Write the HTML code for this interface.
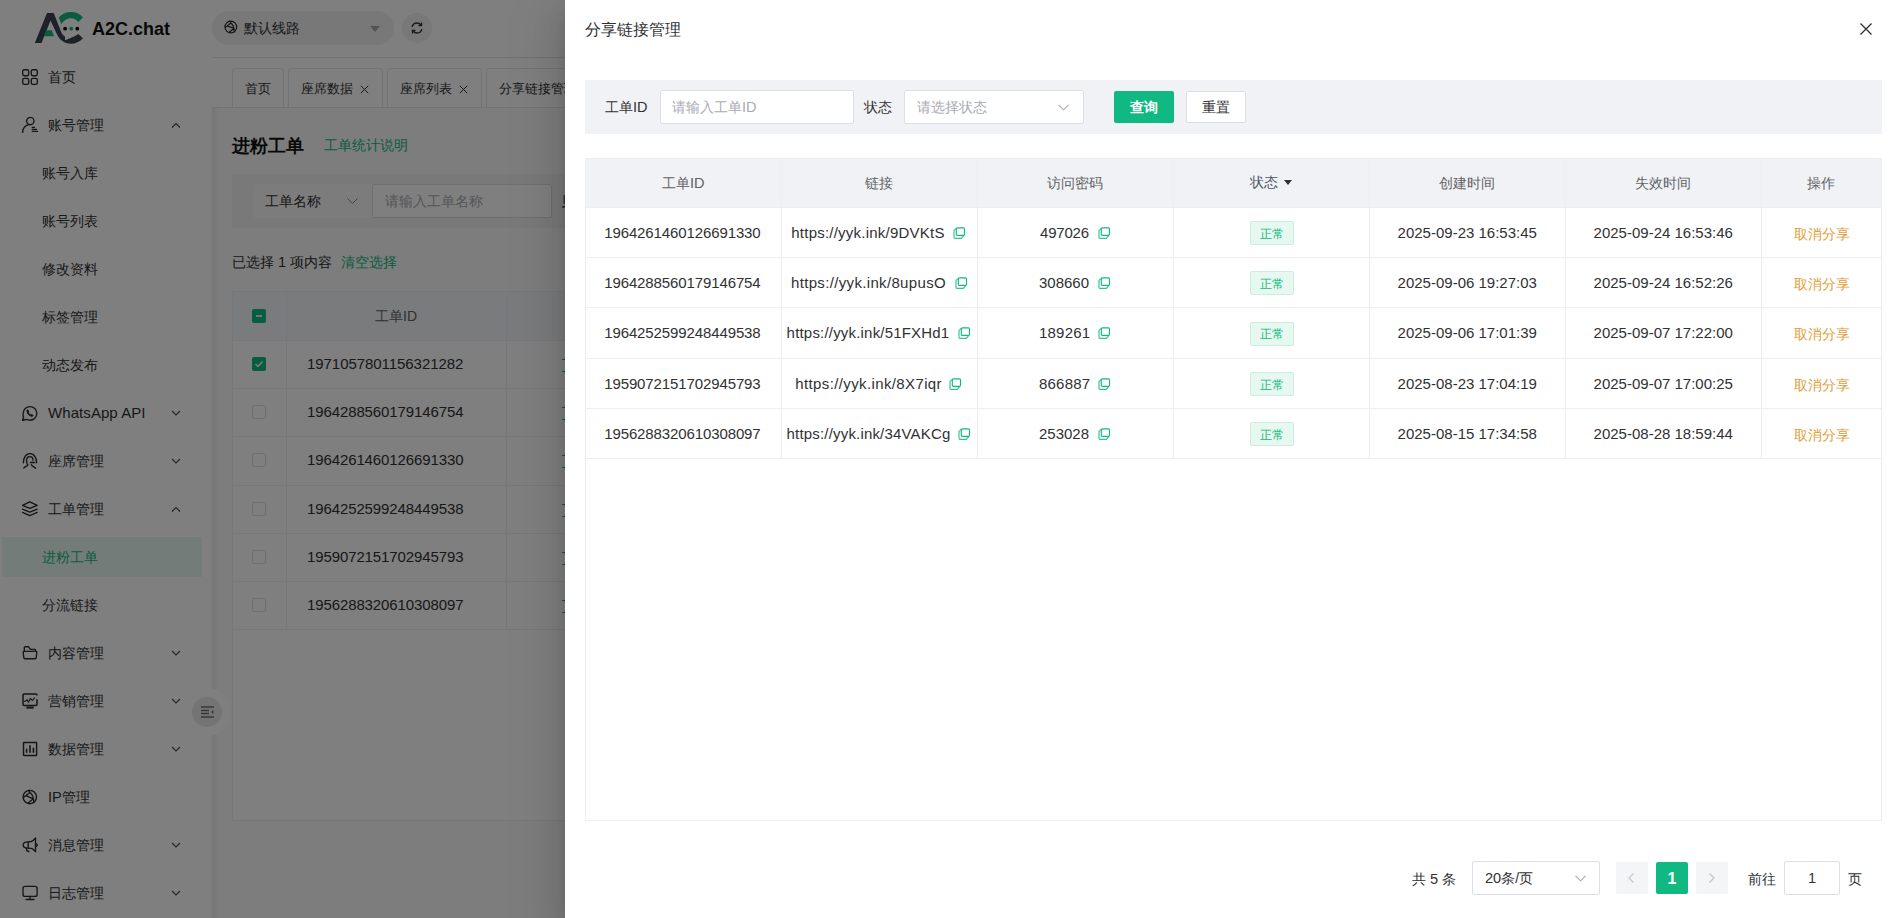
<!DOCTYPE html>
<html><head><meta charset="utf-8"><style>
*{box-sizing:border-box;margin:0;padding:0}
html,body{width:1898px;height:918px;overflow:hidden;background:#fff;font-family:"Liberation Sans",sans-serif;color:#303133;font-size:14px}
.t{position:absolute;white-space:nowrap}
.a{position:absolute}
svg{display:block}
</style></head><body>
<div class="a" style="left:0;top:0;width:1898px;height:918px;background:#fff">
<div class="a" style="left:0;top:0;width:212px;height:918px;background:#fff">
<svg class="a" style="left:34px;top:11px" width="50" height="34" viewBox="0 0 50 34">
<path d="M0.8 31.9 L13 2 L19.7 2 L27 20.5 C28 23 29.4 24.6 31 25.5 L31 29.3 C35.5 27.6 40 26 44.4 23.1 L48.9 27.3 C45.5 30.9 41.5 32.8 37 32.8 C30.5 32.8 25.6 29.2 22.6 22.6 L16.5 9.6 L7.5 31.9 Z" fill="#3b4252"/>
<path d="M12.1 19.2 L17.8 19.2 L20 25.3 L9.9 25.3 Z" fill="#10b981"/>
<path d="M24.8 6.4 C28 2.8 32.5 1.1 37 1.1 C41.5 1.1 46 2.8 48.9 6.4 L44.4 11 C42.5 8.6 39.8 7.2 37 7.2 C33 7.2 29.5 9.5 27.4 13.3 Z" fill="#10b981"/>
<circle cx="31.1" cy="17.7" r="1.9" fill="#000"/><circle cx="37.2" cy="17.7" r="1.9" fill="#10b981"/><circle cx="43.3" cy="17.7" r="1.9" fill="#000"/>
</svg>
<div class="t" style="left:92px;top:20px;font-size:18px;line-height:18px;color:#111;font-weight:bold;letter-spacing:0px">A2C.chat</div>
<div class="a" style="left:22px;top:69px"><svg width="16" height="16" viewBox="0 0 16 16" stroke="#2b2b2b" stroke-width="1.35" fill="none" stroke-linecap="round" stroke-linejoin="round"><rect x="0.7" y="0.7" width="6" height="6" rx="1.6"/><rect x="9.3" y="0.7" width="6" height="6" rx="1.6"/><rect x="0.7" y="9.3" width="6" height="6" rx="1.6"/><rect x="9.3" y="9.3" width="6" height="6" rx="1.6"/></svg></div>
<div class="t" style="left:48px;top:70px;font-size:14px;line-height:14px;color:#303133;font-weight:normal;">首页</div>
<div class="a" style="left:22px;top:117px"><svg width="16" height="16" viewBox="0 0 16 16" stroke="#2b2b2b" stroke-width="1.35" fill="none" stroke-linecap="round" stroke-linejoin="round"><circle cx="8.3" cy="4" r="3.7"/><path d="M6.6 7.6 C3 8.6 0.8 11.5 0.5 15.6"/><path d="M10.2 10.4 H12.5 M10.2 12.4 H14.5 M10.2 14.3 H15.6" stroke-width="1.2"/></svg></div>
<div class="t" style="left:48px;top:118px;font-size:14px;line-height:14px;color:#303133;font-weight:normal;">账号管理</div>
<div class="a" style="left:171px;top:122px"><svg width="10" height="7" viewBox="0 0 10 7"><path d="M1 5.5 L5 1.5 L9 5.5" stroke="#444" stroke-width="1.1" fill="none"/></svg></div>
<div class="t" style="left:42px;top:166px;font-size:14px;line-height:14px;color:#303133;font-weight:normal;">账号入库</div>
<div class="t" style="left:42px;top:214px;font-size:14px;line-height:14px;color:#303133;font-weight:normal;">账号列表</div>
<div class="t" style="left:42px;top:262px;font-size:14px;line-height:14px;color:#303133;font-weight:normal;">修改资料</div>
<div class="t" style="left:42px;top:310px;font-size:14px;line-height:14px;color:#303133;font-weight:normal;">标签管理</div>
<div class="t" style="left:42px;top:358px;font-size:14px;line-height:14px;color:#303133;font-weight:normal;">动态发布</div>
<div class="a" style="left:22px;top:405px"><svg width="16" height="16" viewBox="0 0 16 16" stroke="#2b2b2b" stroke-width="1.35" fill="none" stroke-linecap="round" stroke-linejoin="round"><path d="M0 15.8 L1.6 12.6 C1.1 11.4 0.9 10.2 1.2 8.5 C1.2 4.5 4.3 1.6 8 1.6 C11.8 1.6 14.8 4.6 14.8 8.4 C14.8 12.2 11.8 15.2 8 15.2 C6.6 15.2 5.6 14.4 4.3 14.4 Z"/><path d="M4.9 5 C5.4 4.4 6.1 4.5 6.4 5 L7 6.4 C7.2 6.8 7 7.2 6.7 7.4 C7.2 8.3 7.9 9.1 8.8 9.6 C9 9.3 9.5 9.1 9.9 9.3 L11.2 9.9 C11.7 10.2 11.7 10.9 11.2 11.3 C10.6 11.8 9.5 11.9 8.3 11.2 C6.7 10.3 5.3 8.8 4.7 7.2 C4.4 6.3 4.4 5.6 4.9 5 Z" fill="#2b2b2b" stroke="none"/></svg></div>
<div class="a" style="left:171px;top:410px"><svg width="10" height="7" viewBox="0 0 10 7"><path d="M1 1 L5 5 L9 1" stroke="#444" stroke-width="1.1" fill="none"/></svg></div>
<div class="a" style="left:22px;top:453px"><svg width="16" height="16" viewBox="0 0 16 16" stroke="#2b2b2b" stroke-width="1.35" fill="none" stroke-linecap="round" stroke-linejoin="round"><path d="M1.4 9.8 C1.4 4 4.4 0.6 8 0.6 C11.6 0.6 14.6 4 14.6 9.8"/><path d="M5.4 11.2 C4.5 10.3 4.6 9 4.6 7.2 C4.6 5 6 3.6 7.9 3.6 C9.8 3.6 11 5 11 7.2"/><path d="M8.4 9.6 H12.6" stroke-width="1.5"/><path d="M5.9 11.7 C5.2 13.4 3.2 13.6 1.8 15"/><path d="M9.4 11.7 C10.1 13.4 12.1 13.6 13.5 15.3"/></svg></div>
<div class="t" style="left:48px;top:454px;font-size:14px;line-height:14px;color:#303133;font-weight:normal;">座席管理</div>
<div class="a" style="left:171px;top:458px"><svg width="10" height="7" viewBox="0 0 10 7"><path d="M1 1 L5 5 L9 1" stroke="#444" stroke-width="1.1" fill="none"/></svg></div>
<div class="a" style="left:22px;top:501px"><svg width="16" height="16" viewBox="0 0 16 16" stroke="#2b2b2b" stroke-width="1.35" fill="none" stroke-linecap="round" stroke-linejoin="round"><path d="M7.8 0.9 L15.2 4.3 L7.8 7.4 L0.5 4.3 Z"/><path d="M0.5 8.2 L7.8 11.2 L15.2 8.2"/><path d="M0.5 11.4 L7.8 14.6 L15.2 11.4"/></svg></div>
<div class="t" style="left:48px;top:502px;font-size:14px;line-height:14px;color:#303133;font-weight:normal;">工单管理</div>
<div class="a" style="left:171px;top:506px"><svg width="10" height="7" viewBox="0 0 10 7"><path d="M1 5.5 L5 1.5 L9 5.5" stroke="#444" stroke-width="1.1" fill="none"/></svg></div>
<div class="a" style="left:2px;top:537px;width:200px;height:40px;background:#e7f8f1"></div>
<div class="t" style="left:42px;top:550px;font-size:14px;line-height:14px;color:#10b981;font-weight:normal;">进粉工单</div>
<div class="t" style="left:42px;top:598px;font-size:14px;line-height:14px;color:#303133;font-weight:normal;">分流链接</div>
<div class="a" style="left:22px;top:645px"><svg width="16" height="16" viewBox="0 0 16 16" stroke="#2b2b2b" stroke-width="1.35" fill="none" stroke-linecap="round" stroke-linejoin="round"><path d="M2.3 6.2 V2.6 C2.3 2 2.6 1.7 3.2 1.7 H6.5 L8.3 4.3 H12.8 C13.3 4.3 13.5 4.6 13.5 5 V6.2"/><path d="M1.2 7.2 C1.2 6.7 1.5 6.4 2 6.4 H14 C14.5 6.4 14.8 6.7 14.8 7.2 L14.2 12.7 C14.1 13.3 13.8 13.7 13.2 13.7 H2.8 C2.2 13.7 1.9 13.3 1.8 12.7 Z"/></svg></div>
<div class="t" style="left:48px;top:646px;font-size:14px;line-height:14px;color:#303133;font-weight:normal;">内容管理</div>
<div class="a" style="left:171px;top:650px"><svg width="10" height="7" viewBox="0 0 10 7"><path d="M1 1 L5 5 L9 1" stroke="#444" stroke-width="1.1" fill="none"/></svg></div>
<div class="a" style="left:22px;top:693px"><svg width="16" height="16" viewBox="0 0 16 16" stroke="#2b2b2b" stroke-width="1.35" fill="none" stroke-linecap="round" stroke-linejoin="round"><path d="M15 6.8 V11.2 C15 11.9 14.5 12.4 13.8 12.4 H2.2 C1.5 12.4 1 11.9 1 11.2 V2.1 C1 1.4 1.5 0.9 2.2 0.9 H13.8 C14.5 0.9 15 1.4 15 2.1" stroke-width="1.5"/><path d="M2.3 8.5 L4 7.8 L5.2 6.7 L6.5 9.3 L8.3 5.4 L10.4 7.5 L12.7 4.8" stroke-width="1.1"/><rect x="4.4" y="13.6" width="7.3" height="2" fill="#2b2b2b" stroke="none"/></svg></div>
<div class="t" style="left:48px;top:694px;font-size:14px;line-height:14px;color:#303133;font-weight:normal;">营销管理</div>
<div class="a" style="left:171px;top:698px"><svg width="10" height="7" viewBox="0 0 10 7"><path d="M1 1 L5 5 L9 1" stroke="#444" stroke-width="1.1" fill="none"/></svg></div>
<div class="a" style="left:22px;top:741px"><svg width="16" height="16" viewBox="0 0 16 16" stroke="#2b2b2b" stroke-width="1.35" fill="none" stroke-linecap="round" stroke-linejoin="round"><rect x="1.5" y="1.4" width="13.1" height="13" rx="0.4" stroke-width="1.45"/><path d="M4.6 8.4 V11.2 M8 4.8 V11.2 M11.4 7.4 V11.2" stroke-width="1.6"/></svg></div>
<div class="t" style="left:48px;top:742px;font-size:14px;line-height:14px;color:#303133;font-weight:normal;">数据管理</div>
<div class="a" style="left:171px;top:746px"><svg width="10" height="7" viewBox="0 0 10 7"><path d="M1 1 L5 5 L9 1" stroke="#444" stroke-width="1.1" fill="none"/></svg></div>
<div class="a" style="left:22px;top:789px"><svg width="16" height="16" viewBox="0 0 16 16" stroke="#2b2b2b" stroke-width="1.35" fill="none" stroke-linecap="round" stroke-linejoin="round"><circle cx="7.8" cy="8" r="6.7"/><path d="M3.8 6.7 L11.4 9.8 M7.8 3.5 L3.8 6.7 M7.8 3.5 C9.5 4.5 10.9 7 11.4 9.8 M11.4 9.8 L6.2 13.8 M11.4 9.8 L12 13.6 M7.8 3.5 L6.8 1.3 M3.8 6.7 L1.4 8.4"/></svg></div>
<div class="t" style="left:48px;top:790px;font-size:14px;line-height:14px;color:#303133;font-weight:normal;"><span style="font-size:14.6px">IP</span>管理</div>
<div class="a" style="left:22px;top:837px"><svg width="16" height="16" viewBox="0 0 16 16" stroke="#2b2b2b" stroke-width="1.35" fill="none" stroke-linecap="round" stroke-linejoin="round"><path d="M13.5 1.2 V14.5"/><path d="M13.5 1.2 C12 2.8 10.8 4.2 9.2 4.5 L5.4 4.8 C3 4.8 1.2 6.2 1.2 8 C1.2 9.8 3 11.1 5.4 11.1 L9.2 11.3 C10.8 11.6 12 13 13.5 14.5"/><path d="M6.2 4.8 V11.1"/><path d="M4.4 11.4 C4.4 13 5.4 14.5 7 14.5"/><path d="M13.8 6.5 C15 7 15.3 8 15.3 8 C15.3 8.6 14.8 9.2 13.8 9.5"/></svg></div>
<div class="t" style="left:48px;top:838px;font-size:14px;line-height:14px;color:#303133;font-weight:normal;">消息管理</div>
<div class="a" style="left:171px;top:842px"><svg width="10" height="7" viewBox="0 0 10 7"><path d="M1 1 L5 5 L9 1" stroke="#444" stroke-width="1.1" fill="none"/></svg></div>
<div class="a" style="left:22px;top:885px"><svg width="16" height="16" viewBox="0 0 16 16" stroke="#2b2b2b" stroke-width="1.35" fill="none" stroke-linecap="round" stroke-linejoin="round"><rect x="1" y="1.4" width="14.1" height="10" rx="2"/><path d="M4.1 14.5 H12 M8 11.4 V14.3"/></svg></div>
<div class="t" style="left:48px;top:886px;font-size:14px;line-height:14px;color:#303133;font-weight:normal;">日志管理</div>
<div class="a" style="left:171px;top:890px"><svg width="10" height="7" viewBox="0 0 10 7"><path d="M1 1 L5 5 L9 1" stroke="#444" stroke-width="1.1" fill="none"/></svg></div>
</div>
<div class="a" style="left:212px;top:0;width:1686px;height:58px;background:#fff;border-bottom:1px solid #e4e7ed"></div>
<div class="a" style="left:212px;top:11px;width:182px;height:34px;border-radius:17px;background:#f0f0f2"></div>
<div class="a" style="left:224px;top:20px;transform:scale(0.875);transform-origin:0 0"><svg width="16" height="16" viewBox="0 0 16 16" stroke="#2b2b2b" stroke-width="1.35" fill="none" stroke-linecap="round" stroke-linejoin="round"><circle cx="7.8" cy="8" r="6.7"/><path d="M3.8 6.7 L11.4 9.8 M7.8 3.5 L3.8 6.7 M7.8 3.5 C9.5 4.5 10.9 7 11.4 9.8 M11.4 9.8 L6.2 13.8 M11.4 9.8 L12 13.6 M7.8 3.5 L6.8 1.3 M3.8 6.7 L1.4 8.4"/></svg></div>
<div class="t" style="left:244px;top:21px;font-size:14px;line-height:14px;color:#303133;font-weight:normal;">默认线路</div>
<svg class="a" style="left:370px;top:26px" width="10" height="6" viewBox="0 0 10 6"><path d="M0 0 H10 L5 6 Z" fill="#a8abb2"/></svg>
<div class="a" style="left:402px;top:13px;width:30px;height:30px;border-radius:15px;background:#f0f0f2"></div>
<svg class="a" style="left:410px;top:21px" width="14" height="14" viewBox="0 0 14 14" stroke="#333" stroke-width="1.4" fill="none"><path d="M2.2 6 C2.6 3.6 4.6 2 7 2 C8.6 2 10 2.8 10.9 4"/><path d="M11.8 8 C11.4 10.4 9.4 12 7 12 C5.4 12 4 11.2 3.1 10"/><path d="M11.5 1.5 V4.6 H8.5" /><path d="M2.5 12.5 V9.4 H5.5"/></svg>
<div class="a" style="left:212px;top:58px;width:1686px;height:50px;background:#fff;border-bottom:1px solid #e4e7ed"></div>
<div class="a" style="left:232px;top:68px;width:52px;height:39px;border:1px solid #e4e7ed;border-bottom:none;border-radius:4px 4px 0 0;background:#fff"></div>
<div class="t" style="left:245px;top:82px;font-size:13px;line-height:13px;color:#303133;font-weight:normal;">首页</div>
<div class="a" style="left:288px;top:68px;width:95px;height:39px;border:1px solid #e4e7ed;border-bottom:none;border-radius:4px 4px 0 0;background:#fff"></div>
<div class="t" style="left:301px;top:82px;font-size:13px;line-height:13px;color:#303133;font-weight:normal;">座席数据</div>
<svg class="a" style="left:360px;top:85px" width="9" height="9" viewBox="0 0 9 9" stroke="#333" stroke-width="1"><path d="M0.8 0.8 L8.2 8.2 M8.2 0.8 L0.8 8.2"/></svg>
<div class="a" style="left:387px;top:68px;width:95px;height:39px;border:1px solid #e4e7ed;border-bottom:none;border-radius:4px 4px 0 0;background:#fff"></div>
<div class="t" style="left:400px;top:82px;font-size:13px;line-height:13px;color:#303133;font-weight:normal;">座席列表</div>
<svg class="a" style="left:459px;top:85px" width="9" height="9" viewBox="0 0 9 9" stroke="#333" stroke-width="1"><path d="M0.8 0.8 L8.2 8.2 M8.2 0.8 L0.8 8.2"/></svg>
<div class="a" style="left:486px;top:68px;width:115px;height:39px;border:1px solid #e4e7ed;border-bottom:none;border-radius:4px 4px 0 0;background:#fff"></div>
<div class="t" style="left:499px;top:82px;font-size:13px;line-height:13px;color:#303133;font-weight:normal;">分享链接管理</div>
<div class="a" style="left:212px;top:108px;width:1686px;height:810px;background:#fafafa"></div>
<div class="a" style="left:212px;top:108px;width:6px;height:810px;background:linear-gradient(90deg,rgba(0,0,0,.05),rgba(0,0,0,0))"></div>
<div class="t" style="left:232px;top:137px;font-size:18px;line-height:18px;color:#111;font-weight:bold;">进粉工单</div>
<div class="t" style="left:324px;top:138px;font-size:14px;line-height:14px;color:#10b981;font-weight:normal;">工单统计说明</div>
<div class="a" style="left:232px;top:174px;width:1660px;height:54px;background:#f2f2f2"></div>
<div class="a" style="left:253px;top:184px;width:120px;height:34px;background:#f8f8f8;border-radius:2px 0 0 2px"></div>
<div class="t" style="left:265px;top:194px;font-size:14px;line-height:14px;color:#303133;font-weight:normal;">工单名称</div>
<svg class="a" style="left:347px;top:198px" width="11" height="6" viewBox="0 0 11 6"><path d="M0.5 0.5 L5.5 5.5 L10.5 0.5" stroke="#888" stroke-width="1" fill="none"/></svg>
<div class="a" style="left:372px;top:184px;width:180px;height:34px;background:#fff;border:1px solid #dcdfe6;border-radius:2px"></div>
<div class="t" style="left:385px;top:194px;font-size:14px;line-height:14px;color:#a8abb2;font-weight:normal;">请输入工单名称</div>
<div class="t" style="left:561px;top:194px;font-size:14px;line-height:14px;color:#303133;font-weight:normal;">贝</div>
<div class="t" style="left:232px;top:255px;font-size:14px;line-height:14px;color:#303133;font-weight:normal;">已选择 <span style="font-size:14.6px">1</span> 项内容</div>
<div class="t" style="left:341px;top:255px;font-size:14px;line-height:14px;color:#10b981;font-weight:normal;">清空选择</div>
<div class="a" style="left:232px;top:291px;width:1660px;height:530px;background:#fff;border:1px solid #ebeef5"></div>
<div class="a" style="left:233px;top:292px;width:1658px;height:49px;background:#f5f7fa;border-bottom:1px solid #ebeef5"></div>
<div class="a" style="left:286px;top:292px;width:1px;height:338px;background:#ebeef5"></div>
<div class="a" style="left:506px;top:292px;width:1px;height:338px;background:#ebeef5"></div>
<svg class="a" style="left:252px;top:309px" width="14" height="14" viewBox="0 0 14 14"><rect width="14" height="14" rx="2" fill="#10b981"/><path d="M4 7 H10" stroke="#fff" stroke-width="1.6"/></svg>
<div class="t" style="left:375px;top:309px;font-size:14px;line-height:14px;color:#606266;font-weight:normal;">工单ID</div>
<div class="a" style="left:233px;top:388px;width:1658px;height:1px;background:#ebeef5"></div>
<svg class="a" style="left:252px;top:357px" width="14" height="14" viewBox="0 0 14 14"><rect width="14" height="14" rx="2" fill="#10b981"/><path d="M3.5 7 L6 9.5 L10.5 4.5" stroke="#fff" stroke-width="1.3" fill="none"/></svg>
<div class="a" style="left:562px;top:359px;width:3px;height:1px;background:#10b981"></div>
<div class="a" style="left:562px;top:371px;width:3px;height:1px;background:#10b981"></div>
<div class="a" style="left:233px;top:436px;width:1658px;height:1px;background:#ebeef5"></div>
<div class="a" style="left:252px;top:405px;width:14px;height:14px;border:1px solid #dcdfe6;border-radius:2px;background:#fff"></div>
<div class="a" style="left:562px;top:407px;width:3px;height:1px;background:#10b981"></div>
<div class="a" style="left:562px;top:419px;width:3px;height:1px;background:#10b981"></div>
<div class="a" style="left:233px;top:485px;width:1658px;height:1px;background:#ebeef5"></div>
<div class="a" style="left:252px;top:453px;width:14px;height:14px;border:1px solid #dcdfe6;border-radius:2px;background:#fff"></div>
<div class="a" style="left:562px;top:455px;width:3px;height:1px;background:#10b981"></div>
<div class="a" style="left:562px;top:467px;width:3px;height:1px;background:#10b981"></div>
<div class="a" style="left:233px;top:533px;width:1658px;height:1px;background:#ebeef5"></div>
<div class="a" style="left:252px;top:502px;width:14px;height:14px;border:1px solid #dcdfe6;border-radius:2px;background:#fff"></div>
<div class="a" style="left:562px;top:504px;width:3px;height:1px;background:#10b981"></div>
<div class="a" style="left:562px;top:516px;width:3px;height:1px;background:#10b981"></div>
<div class="a" style="left:233px;top:581px;width:1658px;height:1px;background:#ebeef5"></div>
<div class="a" style="left:252px;top:550px;width:14px;height:14px;border:1px solid #dcdfe6;border-radius:2px;background:#fff"></div>
<div class="a" style="left:562px;top:552px;width:3px;height:1px;background:#10b981"></div>
<div class="a" style="left:562px;top:564px;width:3px;height:1px;background:#10b981"></div>
<div class="a" style="left:233px;top:629px;width:1658px;height:1px;background:#ebeef5"></div>
<div class="a" style="left:252px;top:598px;width:14px;height:14px;border:1px solid #dcdfe6;border-radius:2px;background:#fff"></div>
<div class="a" style="left:562px;top:600px;width:3px;height:1px;background:#10b981"></div>
<div class="a" style="left:562px;top:612px;width:3px;height:1px;background:#10b981"></div>
<div class="t" style="left:307px;top:356.0px;font-size:15px;line-height:15px;letter-spacing:-0.056px;color:#303133">1971057801156321282</div><div class="t" style="left:307px;top:404.0px;font-size:15px;line-height:15px;letter-spacing:-0.111px;color:#303133">1964288560179146754</div><div class="t" style="left:307px;top:452.0px;font-size:15px;line-height:15px;letter-spacing:-0.111px;color:#303133">1964261460126691330</div><div class="t" style="left:307px;top:501.0px;font-size:15px;line-height:15px;letter-spacing:-0.111px;color:#303133">1964252599248449538</div><div class="t" style="left:307px;top:549.0px;font-size:15px;line-height:15px;letter-spacing:-0.111px;color:#303133">1959072151702945793</div><div class="t" style="left:307px;top:597.0px;font-size:15px;line-height:15px;letter-spacing:-0.111px;color:#303133">1956288320610308097</div>
<div class="t" style="left:48.1px;top:405.0px;font-size:15px;line-height:15px;letter-spacing:0.055px;color:#303133">WhatsApp API</div>
<div class="a" style="left:183px;top:688px;width:48px;height:48px;border-radius:24px;background:#fff"></div>
<div class="a" style="left:192px;top:697px;width:30px;height:30px;border-radius:15px;background:#e8e8e8"></div>
<svg class="a" style="left:200px;top:705px" width="15" height="13" viewBox="0 0 15 13"><path d="M1 2 H14 M1 5.4 H9 M1 8.5 H9 M1 12 H14" stroke="#707070" stroke-width="1.5"/><path d="M13.3 5 L11 7 L13.3 9 Z" fill="#707070"/></svg>
</div>
<div class="a" style="left:0;top:0;width:1898px;height:918px;background:rgba(0,0,0,.5)"></div>
<div class="a" style="left:565px;top:0;width:1333px;height:918px;background:#fff;box-shadow:0 16px 48px 16px rgba(0,0,0,.08),0 12px 32px rgba(0,0,0,.12),0 8px 16px -8px rgba(0,0,0,.16)">
<div class="t" style="left:20px;top:22px;font-size:16px;line-height:16px;color:#303133;font-weight:normal;">分享链接管理</div>
<svg class="a" style="left:1295px;top:23px" width="12" height="12" viewBox="0 0 12 12" stroke="#303133" stroke-width="1.3"><path d="M0.5 0.5 L11.5 11.5 M11.5 0.5 L0.5 11.5"/></svg>
<div class="a" style="left:20px;top:80px;width:1297px;height:54px;background:#f1f2f5"></div>
<div class="t" style="left:40px;top:100px;font-size:14px;line-height:14px;color:#303133;font-weight:normal;">工单<span style="font-size:14.5px">ID</span></div>
<div class="a" style="left:95px;top:90px;width:194px;height:34px;background:#fff;border:1px solid #dcdfe6;border-radius:2px"></div>
<div class="t" style="left:107px;top:100px;font-size:14px;line-height:14px;color:#a8abb2;font-weight:normal;">请输入工单<span style="font-size:14.5px">ID</span></div>
<div class="t" style="left:299px;top:100px;font-size:14px;line-height:14px;color:#303133;font-weight:normal;">状态</div>
<div class="a" style="left:339px;top:90px;width:180px;height:34px;background:#fff;border:1px solid #dcdfe6;border-radius:2px"></div>
<div class="t" style="left:352px;top:100px;font-size:14px;line-height:14px;color:#a8abb2;font-weight:normal;">请选择状态</div>
<svg class="a" style="left:493px;top:104px" width="11" height="7" viewBox="0 0 11 7"><path d="M0.5 0.8 L5.5 5.8 L10.5 0.8" stroke="#a8abb2" stroke-width="1.1" fill="none"/></svg>
<div class="a" style="left:549px;top:91px;width:60px;height:32px;background:#10b981;border-radius:2px"></div>
<div class="t" style="left:565px;top:100px;font-size:14px;line-height:14px;color:#fff;font-weight:bold;">查询</div>
<div class="a" style="left:621px;top:91px;width:60px;height:32px;background:#fff;border:1px solid #dcdfe6;border-radius:2px"></div>
<div class="t" style="left:637px;top:100px;font-size:14px;line-height:14px;color:#303133;font-weight:normal;">重置</div>
<div class="a" style="left:20px;top:158px;width:1297px;height:663px;border:1px solid #ebeef5;background:#fff"></div>
<div class="a" style="left:21px;top:159px;width:1295px;height:49px;background:#f1f2f5"></div>
<div class="a" style="left:21px;top:207px;width:1295px;height:1px;background:#ebeef5"></div>
<div class="a" style="left:216px;top:159px;width:1px;height:300px;background:#ebeef5"></div>
<div class="a" style="left:412px;top:159px;width:1px;height:300px;background:#ebeef5"></div>
<div class="a" style="left:608px;top:159px;width:1px;height:300px;background:#ebeef5"></div>
<div class="a" style="left:804px;top:159px;width:1px;height:300px;background:#ebeef5"></div>
<div class="a" style="left:1000px;top:159px;width:1px;height:300px;background:#ebeef5"></div>
<div class="a" style="left:1196px;top:159px;width:1px;height:300px;background:#ebeef5"></div>
<div class="t" style="left:97px;top:176px;font-size:14px;line-height:14px;color:#606266;font-weight:normal;">工单<span style="font-size:14.5px">ID</span></div>
<div class="t" style="left:300px;top:176px;font-size:14px;line-height:14px;color:#606266;font-weight:normal;">链接</div>
<div class="t" style="left:482px;top:176px;font-size:14px;line-height:14px;color:#606266;font-weight:normal;">访问密码</div>
<div class="t" style="left:685px;top:175px;font-size:14px;line-height:14px;color:#4c5566;font-weight:normal;">状态</div>
<div class="t" style="left:874px;top:176px;font-size:14px;line-height:14px;color:#606266;font-weight:normal;">创建时间</div>
<div class="t" style="left:1070px;top:176px;font-size:14px;line-height:14px;color:#606266;font-weight:normal;">失效时间</div>
<div class="t" style="left:1242px;top:176px;font-size:14px;line-height:14px;color:#606266;font-weight:normal;">操作</div>
<svg class="a" style="left:719px;top:180px" width="8" height="5" viewBox="0 0 8 5"><path d="M0 0 H8 L4 5 Z" fill="#303133"/></svg>
<div class="a" style="left:21px;top:257px;width:1295px;height:1px;background:#ebeef5"></div>
<div class="t" style="left:39.2px;top:224.5px;font-size:15px;line-height:15px;letter-spacing:-0.111px;color:#303133">1964261460126691330</div>
<div class="t" style="left:226.3px;top:224.5px;font-size:15px;line-height:15px;letter-spacing:0.224px;color:#303133">https://yyk.ink/9DVKtS</div>
<div class="t" style="left:475px;top:224.5px;font-size:15px;line-height:15px;letter-spacing:-0.2px;color:#303133">497026</div>
<div class="a" style="left:685px;top:221px;width:44px;height:24px;background:#e7f8f1;border:1px solid #c8efdf;border-radius:2px"></div>
<div class="t" style="left:695px;top:228px;font-size:12px;line-height:12px;color:#10b981;font-weight:normal;">正常</div>
<div class="t" style="left:832.6px;top:224.5px;font-size:15px;line-height:15px;letter-spacing:0.0px;color:#303133">2025-09-23 16:53:45</div>
<div class="t" style="left:1028.6px;top:224.5px;font-size:15px;line-height:15px;letter-spacing:0.0px;color:#303133">2025-09-24 16:53:46</div>
<div class="t" style="left:1229px;top:226.5px;font-size:14px;line-height:14px;color:#e29c36;font-weight:normal;">取消分享</div>
<svg class="a" style="left:382.20000000000005px;top:221.5px" width="24" height="24" viewBox="0 0 24 24" stroke="#10b981" stroke-width="1.15" fill="none" stroke-linejoin="round"><rect x="9.3" y="5.8" width="8.2" height="7.6" rx="1.1"/><path d="M9.3 6.4 L7 8.4 V15.4 C7 16 7.3 16.3 7.9 16.3 H14.4 L16.8 13.4" stroke-opacity="0.85"/></svg>
<svg class="a" style="left:527.0px;top:221.5px" width="24" height="24" viewBox="0 0 24 24" stroke="#10b981" stroke-width="1.15" fill="none" stroke-linejoin="round"><rect x="9.3" y="5.8" width="8.2" height="7.6" rx="1.1"/><path d="M9.3 6.4 L7 8.4 V15.4 C7 16 7.3 16.3 7.9 16.3 H14.4 L16.8 13.4" stroke-opacity="0.85"/></svg>
<div class="a" style="left:21px;top:307px;width:1295px;height:1px;background:#ebeef5"></div>
<div class="t" style="left:39.2px;top:274.5px;font-size:15px;line-height:15px;letter-spacing:-0.111px;color:#303133">1964288560179146754</div>
<div class="t" style="left:226px;top:274.5px;font-size:15px;line-height:15px;letter-spacing:0.338px;color:#303133">https://yyk.ink/8upusO</div>
<div class="t" style="left:474px;top:274.5px;font-size:15px;line-height:15px;letter-spacing:0.0px;color:#303133">308660</div>
<div class="a" style="left:685px;top:271px;width:44px;height:24px;background:#e7f8f1;border:1px solid #c8efdf;border-radius:2px"></div>
<div class="t" style="left:695px;top:278px;font-size:12px;line-height:12px;color:#10b981;font-weight:normal;">正常</div>
<div class="t" style="left:832.6px;top:274.5px;font-size:15px;line-height:15px;letter-spacing:0.0px;color:#303133">2025-09-06 19:27:03</div>
<div class="t" style="left:1028.6px;top:274.5px;font-size:15px;line-height:15px;letter-spacing:0.0px;color:#303133">2025-09-24 16:52:26</div>
<div class="t" style="left:1229px;top:276.5px;font-size:14px;line-height:14px;color:#e29c36;font-weight:normal;">取消分享</div>
<svg class="a" style="left:383.5px;top:271.5px" width="24" height="24" viewBox="0 0 24 24" stroke="#10b981" stroke-width="1.15" fill="none" stroke-linejoin="round"><rect x="9.3" y="5.8" width="8.2" height="7.6" rx="1.1"/><path d="M9.3 6.4 L7 8.4 V15.4 C7 16 7.3 16.3 7.9 16.3 H14.4 L16.8 13.4" stroke-opacity="0.85"/></svg>
<svg class="a" style="left:527.0px;top:271.5px" width="24" height="24" viewBox="0 0 24 24" stroke="#10b981" stroke-width="1.15" fill="none" stroke-linejoin="round"><rect x="9.3" y="5.8" width="8.2" height="7.6" rx="1.1"/><path d="M9.3 6.4 L7 8.4 V15.4 C7 16 7.3 16.3 7.9 16.3 H14.4 L16.8 13.4" stroke-opacity="0.85"/></svg>
<div class="a" style="left:21px;top:358px;width:1295px;height:1px;background:#ebeef5"></div>
<div class="t" style="left:39.2px;top:325.0px;font-size:15px;line-height:15px;letter-spacing:-0.111px;color:#303133">1964252599248449538</div>
<div class="t" style="left:221.6px;top:325.0px;font-size:15px;line-height:15px;letter-spacing:0.191px;color:#303133">https://yyk.ink/51FXHd1</div>
<div class="t" style="left:474px;top:325.0px;font-size:15px;line-height:15px;letter-spacing:0.2px;color:#303133">189261</div>
<div class="a" style="left:685px;top:322px;width:44px;height:24px;background:#e7f8f1;border:1px solid #c8efdf;border-radius:2px"></div>
<div class="t" style="left:695px;top:328px;font-size:12px;line-height:12px;color:#10b981;font-weight:normal;">正常</div>
<div class="t" style="left:832.6px;top:325.0px;font-size:15px;line-height:15px;letter-spacing:0.0px;color:#303133">2025-09-06 17:01:39</div>
<div class="t" style="left:1028.6px;top:325.0px;font-size:15px;line-height:15px;letter-spacing:0.0px;color:#303133">2025-09-07 17:22:00</div>
<div class="t" style="left:1229px;top:327.0px;font-size:14px;line-height:14px;color:#e29c36;font-weight:normal;">取消分享</div>
<svg class="a" style="left:387.1px;top:322.0px" width="24" height="24" viewBox="0 0 24 24" stroke="#10b981" stroke-width="1.15" fill="none" stroke-linejoin="round"><rect x="9.3" y="5.8" width="8.2" height="7.6" rx="1.1"/><path d="M9.3 6.4 L7 8.4 V15.4 C7 16 7.3 16.3 7.9 16.3 H14.4 L16.8 13.4" stroke-opacity="0.85"/></svg>
<svg class="a" style="left:527.0px;top:322.0px" width="24" height="24" viewBox="0 0 24 24" stroke="#10b981" stroke-width="1.15" fill="none" stroke-linejoin="round"><rect x="9.3" y="5.8" width="8.2" height="7.6" rx="1.1"/><path d="M9.3 6.4 L7 8.4 V15.4 C7 16 7.3 16.3 7.9 16.3 H14.4 L16.8 13.4" stroke-opacity="0.85"/></svg>
<div class="a" style="left:21px;top:408px;width:1295px;height:1px;background:#ebeef5"></div>
<div class="t" style="left:39.2px;top:375.5px;font-size:15px;line-height:15px;letter-spacing:-0.111px;color:#303133">1959072151702945793</div>
<div class="t" style="left:230.3px;top:375.5px;font-size:15px;line-height:15px;letter-spacing:0.376px;color:#303133">https://yyk.ink/8X7iqr</div>
<div class="t" style="left:474px;top:375.5px;font-size:15px;line-height:15px;letter-spacing:0.2px;color:#303133">866887</div>
<div class="a" style="left:685px;top:372px;width:44px;height:24px;background:#e7f8f1;border:1px solid #c8efdf;border-radius:2px"></div>
<div class="t" style="left:695px;top:379px;font-size:12px;line-height:12px;color:#10b981;font-weight:normal;">正常</div>
<div class="t" style="left:832.6px;top:375.5px;font-size:15px;line-height:15px;letter-spacing:0.0px;color:#303133">2025-08-23 17:04:19</div>
<div class="t" style="left:1028.6px;top:375.5px;font-size:15px;line-height:15px;letter-spacing:0.0px;color:#303133">2025-09-07 17:00:25</div>
<div class="t" style="left:1229px;top:377.5px;font-size:14px;line-height:14px;color:#e29c36;font-weight:normal;">取消分享</div>
<svg class="a" style="left:378.29999999999995px;top:372.5px" width="24" height="24" viewBox="0 0 24 24" stroke="#10b981" stroke-width="1.15" fill="none" stroke-linejoin="round"><rect x="9.3" y="5.8" width="8.2" height="7.6" rx="1.1"/><path d="M9.3 6.4 L7 8.4 V15.4 C7 16 7.3 16.3 7.9 16.3 H14.4 L16.8 13.4" stroke-opacity="0.85"/></svg>
<svg class="a" style="left:527.0px;top:372.5px" width="24" height="24" viewBox="0 0 24 24" stroke="#10b981" stroke-width="1.15" fill="none" stroke-linejoin="round"><rect x="9.3" y="5.8" width="8.2" height="7.6" rx="1.1"/><path d="M9.3 6.4 L7 8.4 V15.4 C7 16 7.3 16.3 7.9 16.3 H14.4 L16.8 13.4" stroke-opacity="0.85"/></svg>
<div class="a" style="left:21px;top:458px;width:1295px;height:1px;background:#ebeef5"></div>
<div class="t" style="left:39.2px;top:425.5px;font-size:15px;line-height:15px;letter-spacing:-0.111px;color:#303133">1956288320610308097</div>
<div class="t" style="left:221.6px;top:425.5px;font-size:15px;line-height:15px;letter-spacing:0.177px;color:#303133">https://yyk.ink/34VAKCg</div>
<div class="t" style="left:474px;top:425.5px;font-size:15px;line-height:15px;letter-spacing:0.0px;color:#303133">253028</div>
<div class="a" style="left:685px;top:422px;width:44px;height:24px;background:#e7f8f1;border:1px solid #c8efdf;border-radius:2px"></div>
<div class="t" style="left:695px;top:429px;font-size:12px;line-height:12px;color:#10b981;font-weight:normal;">正常</div>
<div class="t" style="left:832.6px;top:425.5px;font-size:15px;line-height:15px;letter-spacing:0.0px;color:#303133">2025-08-15 17:34:58</div>
<div class="t" style="left:1028.6px;top:425.5px;font-size:15px;line-height:15px;letter-spacing:0.0px;color:#303133">2025-08-28 18:59:44</div>
<div class="t" style="left:1229px;top:427.5px;font-size:14px;line-height:14px;color:#e29c36;font-weight:normal;">取消分享</div>
<svg class="a" style="left:387.1px;top:422.5px" width="24" height="24" viewBox="0 0 24 24" stroke="#10b981" stroke-width="1.15" fill="none" stroke-linejoin="round"><rect x="9.3" y="5.8" width="8.2" height="7.6" rx="1.1"/><path d="M9.3 6.4 L7 8.4 V15.4 C7 16 7.3 16.3 7.9 16.3 H14.4 L16.8 13.4" stroke-opacity="0.85"/></svg>
<svg class="a" style="left:527.0px;top:422.5px" width="24" height="24" viewBox="0 0 24 24" stroke="#10b981" stroke-width="1.15" fill="none" stroke-linejoin="round"><rect x="9.3" y="5.8" width="8.2" height="7.6" rx="1.1"/><path d="M9.3 6.4 L7 8.4 V15.4 C7 16 7.3 16.3 7.9 16.3 H14.4 L16.8 13.4" stroke-opacity="0.85"/></svg>
<div class="t" style="left:847px;top:872px;font-size:14px;line-height:14px;color:#303133;font-weight:normal;">共 <span style="font-size:14.6px">5</span> 条</div>
<div class="a" style="left:907px;top:861px;width:128px;height:34px;background:#fff;border:1px solid #dcdfe6;border-radius:2px"></div>
<div class="t" style="left:920px;top:871px;font-size:14px;line-height:14px;color:#303133;font-weight:normal;"><span style="font-size:14.6px">20</span>条/页</div>
<svg class="a" style="left:1010px;top:875px" width="11" height="7" viewBox="0 0 11 7"><path d="M0.5 0.8 L5.5 5.8 L10.5 0.8" stroke="#a8abb2" stroke-width="1.1" fill="none"/></svg>
<div class="a" style="left:1051px;top:862px;width:32px;height:32px;background:#f4f5f7;border-radius:2px"></div>
<svg class="a" style="left:1063px;top:873px" width="6" height="10" viewBox="0 0 6 10"><path d="M5.5 0.5 L1 5 L5.5 9.5" stroke="#c0c4cc" stroke-width="1.1" fill="none"/></svg>
<div class="a" style="left:1091px;top:862px;width:32px;height:32px;background:#10b981;border-radius:2px"></div>
<div class="t" style="left:1091px;top:871px;width:32px;text-align:center;font-size:16px;line-height:16px;color:#fff;font-weight:bold">1</div>
<div class="a" style="left:1131px;top:862px;width:32px;height:32px;background:#f4f5f7;border-radius:2px"></div>
<svg class="a" style="left:1144px;top:873px" width="6" height="10" viewBox="0 0 6 10"><path d="M0.5 0.5 L5 5 L0.5 9.5" stroke="#c0c4cc" stroke-width="1.1" fill="none"/></svg>
<div class="t" style="left:1183px;top:872px;font-size:14px;line-height:14px;color:#303133;font-weight:normal;">前往</div>
<div class="a" style="left:1219px;top:861px;width:56px;height:34px;background:#fff;border:1px solid #dcdfe6;border-radius:2px"></div>
<div class="t" style="left:1219px;top:871px;width:56px;text-align:center;font-size:14.6px;line-height:15px;color:#303133">1</div>
<div class="t" style="left:1283px;top:872px;font-size:14px;line-height:14px;color:#303133;font-weight:normal;">页</div>
</div>
</body></html>
